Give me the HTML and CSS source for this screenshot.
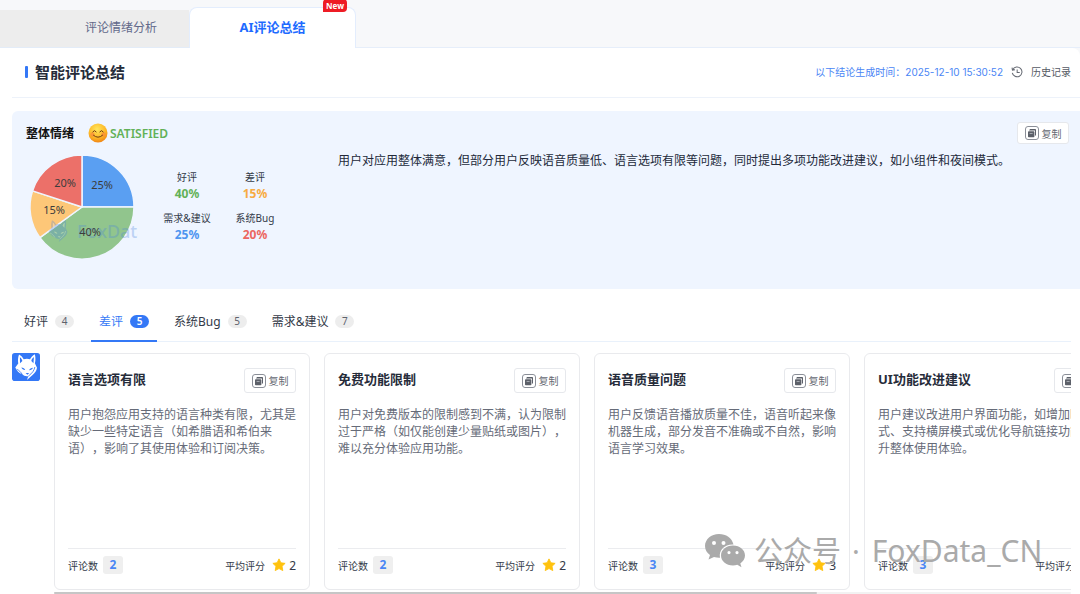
FILE: index.html
```html
<!DOCTYPE html>
<html lang="zh-CN">
<head>
<meta charset="utf-8">
<meta name="viewport" content="width=device-width, initial-scale=1">
<title>智能评论总结</title>
<link rel="stylesheet" href="styles.css">
</head>
<body>
<svg class="defs" aria-hidden="true">
  <symbol id="copy" viewBox="0 0 14 14">
    <rect x="0.5" y="0.5" width="13" height="13" rx="2.5" fill="none" stroke="#8b8f98"/>
    <path d="M5 3h5.2a.8.8 0 0 1 .8.8V9l-1 1V4.600H4z" fill="#5c6069"/>
    <rect x="3" y="5.200" width="6.400" height="6" rx="0.800" fill="#5c6069"/>
    <path d="M4.600 7.500h3" stroke="#b9bcc3" stroke-width="0.800"/>
  </symbol>
  <symbol id="star" viewBox="0 0 24 24">
    <path d="M12 1.500l3.200 6.700 7.300 1-5.300 5.100 1.300 7.300L12 18.100l-6.500 3.500 1.300-7.300L1.500 9.200l7.300-1z" fill="#ffc20e" stroke="#ffc20e" stroke-width="1.500" stroke-linejoin="round"/>
  </symbol>
  <symbol id="fox" viewBox="0 0 30 30">
    <path fill="currentColor" d="M7.500 1.500c2.300 1.300 4 3 5 5.300 2.300-.8 4.700-.8 6.800 0 1-2.200 2.800-4.200 5.200-5.500.9 3.600.8 6.800 0 9.800l2.300 4.800c-.6 3.500-2.200 5.500-4.500 7.300L16 28.800l1.500-4c-2.800.4-5-.3-6.500-1.900-3.500-1.400-6-3.800-7.500-7.400l3.200-4.200C6.200 8 6.300 4.800 7.500 1.500z"/>
    <path class="fox-mark" d="M8.500 4.500c1.500 1.200 2.300 2.500 2.600 4L8.600 11zM23.500 4.300c-1.700 1.300-2.500 2.600-2.800 4.200l2.300 2.500zM10 15.600c2 .1 3.600 1 4.200 2.700-2 .1-3.500-.9-4.200-2.700zM22.500 15.800c-2 .1-3.600 1-4.200 2.700 2 .1 3.500-.9 4.200-2.700zM14.600 21.500h3.800l-1.900 1.800z"/>
    <path class="fox-line" d="M5 17.500c2.800 1 4.300 3 6 5.400M24.500 15c-.6 3.500-2.700 6.500-7 9.800" fill="none" stroke-width="0.900"/>
  </symbol>
</svg>

<nav class="tabs">
  <button class="tab">评论情绪分析</button>
  <button class="tab tab-active">AI评论总结<span class="new">New</span></button>
  <span class="tabs-rest"></span>
</nav>

<main class="page">
  <header class="head">
    <h1>智能评论总结</h1>
    <span class="time">以下结论生成时间：2025-12-10 15:30:52</span>
    <button class="history">
      <svg viewBox="0 0 14 14" width="12" height="12" fill="none" stroke="#666a73" stroke-width="1.200"><path d="M2 4.300A5.700 5.700 0 1 1 1.500 8M1.200 1.800l.5 3 3-.3M7.200 4v3.600h3"/></svg>
      历史记录
    </button>
  </header>

  <section class="overall">
    <div class="overall-left">
      <div class="mood">
        <h2>整体情绪</h2>
        <svg class="emoji" viewBox="0 0 20 20" width="20" height="20">
          <defs><radialGradient id="face" cx="0.45" cy="0.3" r="0.75"><stop offset="0" stop-color="#ffe65c"/><stop offset="0.6" stop-color="#fdb827"/><stop offset="1" stop-color="#ee7c12"/></radialGradient></defs>
          <circle cx="10" cy="10" r="9.500" fill="url(#face)"/>
          <circle cx="4.500" cy="11.500" r="2.200" fill="#f98a3c" opacity="0.700"/><circle cx="15.500" cy="11.500" r="2.200" fill="#f98a3c" opacity="0.700"/>
          <path d="M4.800 8.800q1.700-2.600 3.400 0M11.800 8.800q1.700-2.600 3.400 0M5.500 12.300q4.500 4 9 0" fill="none" stroke="#6e3b12" stroke-width="1" stroke-linecap="round"/>
        </svg>
        <span class="satisfied">SATISFIED</span>
      </div>
      <div class="stats">
        <svg class="pie" viewBox="0 0 112 106" width="112" height="106">
          <g stroke="#eff5ff" stroke-width="1.500" stroke-linejoin="round">
            <path d="M56 53V1A52 52 0 0 1 108 53z" fill="#5a9ff2"/>
            <path d="M56 53H108A52 52 0 0 1 13.900 83.600z" fill="#91c58d"/>
            <path d="M56 53L13.900 83.600A52 52 0 0 1 6.500 36.900z" fill="#fdc778"/>
            <path d="M56 53L6.500 36.900A52 52 0 0 1 56 1z" fill="#ec7069"/>
          </g>
          <g class="pie-mark" opacity="0.300"><use href="#fox" x="20" y="65" width="24" height="24"/><text x="51" y="84">FoxData</text></g>
          <g class="pie-label"><text x="76" y="35">25%</text><text x="64" y="82">40%</text><text x="28" y="60">15%</text><text x="39" y="33">20%</text></g>
        </svg>
        <dl class="legend">
          <div><dt>好评</dt><dd class="green">40%</dd></div>
          <div><dt>差评</dt><dd class="orange">15%</dd></div>
          <div><dt>需求&amp;建议</dt><dd class="blue">25%</dd></div>
          <div><dt>系统Bug</dt><dd class="red">20%</dd></div>
        </dl>
      </div>
    </div>
    <div class="overall-right">
      <button class="copy"><svg width="14" height="14"><use href="#copy"/></svg>复制</button>
      <p>用户对应用整体满意，但部分用户反映语音质量低、语言选项有限等问题，同时提出多项功能改进建议，如小组件和夜间模式。</p>
    </div>
  </section>

  <nav class="filters">
    <button class="filter">好评<span>4</span></button>
    <button class="filter filter-active">差评<span>5</span></button>
    <button class="filter">系统Bug<span>5</span></button>
    <button class="filter">需求&amp;建议<span>7</span></button>
  </nav>

  <section class="list">
    <svg class="logo" viewBox="0 0 30 30" width="28" height="28"><rect width="30" height="30" rx="3" fill="#3478f6"/><use href="#fox" width="30" height="30"/></svg>
    <div class="scroller">
      <div class="cards">
        <article class="card">
          <div class="card-head"><h3>语言选项有限</h3><button class="copy"><svg width="14" height="14"><use href="#copy"/></svg>复制</button></div>
          <p>用户抱怨应用支持的语言种类有限，尤其是缺少一些特定语言（如希腊语和希伯来语），影响了其使用体验和订阅决策。</p>
          <footer>评论数<b>2</b><span class="rating">平均评分</span><svg width="14" height="14"><use href="#star"/></svg><span class="score">2</span></footer>
        </article>
        <article class="card">
          <div class="card-head"><h3>免费功能限制</h3><button class="copy"><svg width="14" height="14"><use href="#copy"/></svg>复制</button></div>
          <p>用户对免费版本的限制感到不满，认为限制过于严格（如仅能创建少量贴纸或图片），难以充分体验应用功能。</p>
          <footer>评论数<b>2</b><span class="rating">平均评分</span><svg width="14" height="14"><use href="#star"/></svg><span class="score">2</span></footer>
        </article>
        <article class="card">
          <div class="card-head"><h3>语音质量问题</h3><button class="copy"><svg width="14" height="14"><use href="#copy"/></svg>复制</button></div>
          <p>用户反馈语音播放质量不佳，语音听起来像机器生成，部分发音不准确或不自然，影响语言学习效果。</p>
          <footer>评论数<b>3</b><span class="rating">平均评分</span><svg width="14" height="14"><use href="#star"/></svg><span class="score">3</span></footer>
        </article>
        <article class="card">
          <div class="card-head"><h3>UI功能改进建议</h3><button class="copy"><svg width="14" height="14"><use href="#copy"/></svg>复制</button></div>
          <p>用户建议改进用户界面功能，如增加暗黑模式、支持横屏模式或优化导航链接功能，提升整体使用体验。</p>
          <footer>评论数<b>3</b><span class="rating">平均评分</span><svg width="14" height="14"><use href="#star"/></svg><span class="score">3</span></footer>
        </article>
      </div>
      <div class="track"><div class="thumb"></div></div>
    </div>
  </section>
</main>

<div class="watermark">
  <svg viewBox="0 0 42 36" width="42" height="36">
    <path fill="#aaa" fill-rule="evenodd" d="M15 1C7 1 1 6.500 1 13c0 4 2 7 5 9l-1.500 4.500L10 24c2 .6 4 .9 6 .8C14.500 17 21 11 29.500 11.500 28 5 22 1 15 1zM10 8a2 2 0 1 1 0 4 2 2 0 0 1 0-4zm9.500 0a2 2 0 1 1 0 4 2 2 0 0 1 0-4z"/>
    <path fill="#aaa" fill-rule="evenodd" d="M29 12.500c-7 0-12 4.500-12 10s5 10 12 10c1.500 0 3-.3 4.300-.7l4.200 2.400-1.200-3.800c2.800-1.900 4.700-4.700 4.700-7.900 0-5.500-5-10-12-10zm-4 5.500a1.600 1.600 0 1 1 0 3.200 1.600 1.600 0 0 1 0-3.200zm8 0a1.600 1.600 0 1 1 0 3.200 1.600 1.600 0 0 1 0-3.200z"/>
  </svg>
  <span>公众号</span><span class="wm-dot">·</span><span class="wm-name">FoxData_CN</span>
</div>
</body>
</html>
```

FILE: styles.css
```css
* { box-sizing: border-box; }
body {
  display: flex;
  flex-direction: column;
  margin: 0;
  height: 100vh;
  overflow: hidden;
  background: #f7f8fa;
  color: #333a48;
  font-family: "Noto Sans", "Noto Sans CJK SC", sans-serif;
  font-size: 12px;
  text-spacing-trim: space-all;
}
h1, h2, h3, p, dl, dd { margin: 0; }
button { padding: 0; border: 0; background: none; font: inherit; color: inherit; }
svg { flex: none; }
.defs { position: absolute; width: 0; height: 0; }

.tabs { display: flex; flex: none; height: 48px; align-items: flex-end; }
.tab { width: 189px; height: 38px; padding: 0 0 3px 53px; background: #ededed; border-bottom: 1px solid #e3ecf8; color: #62698a; }
.tab-active {
  position: relative;
  width: 167px; height: 41px; padding: 0 0 3px;
  border: 1px solid #e3edfd; border-bottom: 0; border-radius: 8px 8px 0 0;
  background: #fff; color: #1e6bff; font-size: 13px; font-weight: 700;
}
.new {
  position: absolute; top: -9px; right: 8px;
  padding: 0 3px; border-radius: 4px 4px 4px 0;
  background: #ee1c25; color: #fff; font-size: 8px; line-height: 13px;
}
.tabs-rest { flex: 1; border-bottom: 1px solid #e6eefa; }

.page { flex: 1; min-height: 0; background: #fff; padding-left: 12px; border-top-right-radius: 8px; }
.head { display: flex; align-items: center; height: 50px; padding: 0 9px 2px 13px; border-bottom: 1px solid #edf2fa; }
h1 { display: flex; align-items: center; gap: 7px; margin-right: auto; font-size: 15px; color: #262c3a; }
h1::before { content: ""; width: 3px; height: 12px; border-radius: 1px; background: #3478f6; }
.time { color: #4a86f5; font-family: Inter, "Noto Sans CJK SC", sans-serif; font-size: 10px; }
.history { display: flex; align-items: center; gap: 8px; margin-left: 8px; font-size: 10px; color: #555a64; }

.overall { display: flex; min-height: 178px; margin-top: 13px; border-radius: 6px 0 0 6px; background: #eff5ff; }
.overall-left { width: 326px; padding: 12px 0 0 14px; }
.mood { display: flex; align-items: center; height: 20px; }
h2 { margin-right: 14px; font-size: 12px; color: #111; }
.satisfied { margin-left: 2px; color: #62b158; font-weight: 600; }
.stats { display: flex; align-items: center; margin-top: 11px; }
.pie { display: block; }
.pie-label { font-size: 11px; text-anchor: middle; fill: #3c3c3c; }
.pie-mark { --fox-cut: #e4ecf2; color: #4c84dd; fill: #4c84dd; font-size: 18px; font-weight: 500; }
.legend { display: grid; grid-template-columns: 68px 68px; row-gap: 8px; margin: 0 0 2px 15px; text-align: center; }
dt { font-size: 10px; line-height: 16px; white-space: nowrap; }
dd { font-size: 12px; line-height: 17px; font-weight: 700; }
.green { color: #62b158; }
.orange { color: #f7ab42; }
.blue { color: #4f96f0; }
.red { color: #ec6660; }
.overall-right { display: flex; flex: 1; flex-direction: column; align-items: flex-end; padding: 11px 11px 0 0; }
.overall-right p { align-self: stretch; margin-top: 7px; line-height: 20px; color: #22293a; }
.copy { display: flex; align-items: center; justify-content: center; gap: 3px; width: 52px; height: 22px; border: 1px solid #e6e8ec; border-radius: 3px; background: #fff; color: #666a73; font-size: 10px; }
.card .copy { height: 25px; }

.filters { display: flex; gap: 9px; height: 42px; margin: 11px 9px 0 0; padding-left: 4px; border-bottom: 1px solid #e9f1fb; }
.filter { display: flex; align-items: center; gap: 7px; height: 42px; padding: 2px 8px 0; border-bottom: 2px solid transparent; }
.filter span { width: 19px; height: 13px; border-radius: 7px; background: #ededed; color: #5d626c; font-size: 10px; line-height: 13px; }
.filter-active { border-color: #3478f6; color: #3478f6; }
.filter-active span { background: #3478f6; color: #fff; font-weight: 600; }

.list { display: flex; gap: 14px; margin: 11px 9px 0 0; }
.logo { color: #fff; }
.fox-mark { fill: var(--fox-cut, #3478f6); }
.fox-line { stroke: var(--fox-cut, #3478f6); }
.scroller { flex: 1; min-width: 0; overflow: hidden; }
.cards { display: flex; gap: 14px; }
.card { display: flex; flex: none; flex-direction: column; width: 256px; height: 237px; padding: 14px 13px 8px; border: 1px solid #e9eaed; border-radius: 6px; }
.card-head { display: flex; justify-content: space-between; }
h3 { font-size: 13px; line-height: 22px; color: #262c3a; }
.card p { margin-top: 13px; line-height: 17px; color: #666b78; }
.card footer { display: flex; align-items: center; height: 33px; margin-top: auto; border-top: 1px solid #ebecef; font-size: 10px; }
.card b { width: 20px; margin-left: 5px; border-radius: 3px; background: #efefef; color: #4a86f5; font-size: 12px; line-height: 18px; text-align: center; }
.rating { margin: 0 7px 0 auto; }
.score { margin-left: 3px; font-size: 12px; }
.track { height: 2px; margin-top: 2px; border-radius: 2px; background: #f2f2f2; }
.thumb { width: 75%; height: 2px; border-radius: 2px; background: #c6c6c6; }

.watermark { position: absolute; left: 704px; bottom: 25px; display: flex; align-items: center; color: #aaa; font-size: 29px; line-height: 36px; }
.watermark span { margin-left: 8px; }
.watermark .wm-dot { margin-left: 11px; }
.watermark .wm-name { margin-left: 12px; font-size: 30px; }
```
